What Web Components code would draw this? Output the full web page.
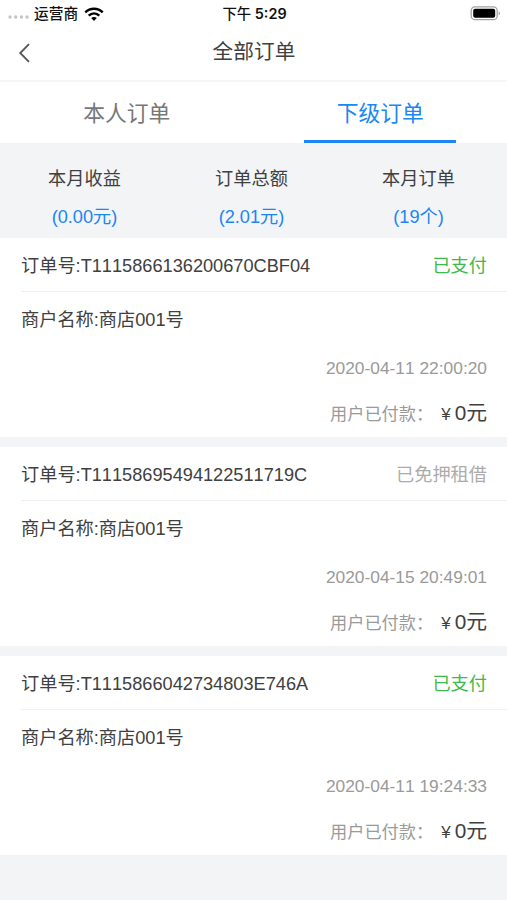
<!DOCTYPE html>
<html lang="zh-CN">
<head>
  <meta charset="UTF-8">
  <meta name="viewport" content="width=device-width, initial-scale=1.0">
  <title>全部订单</title>
  <style>
    body {
      margin: 0;
      min-height: 100vh;
      background: #f2f4f6;
      color: #404040;
      font-family: "Liberation Sans", "Noto Sans CJK SC", sans-serif;
      font-kerning: none;
    }
  </style>
</head>
<body>
  <order-page></order-page>

  <script>
    class StatusBar extends HTMLElement {
      constructor() {
        super();
        this.attachShadow({ mode: 'open' });

        this.shadowRoot.innerHTML = `
          <style>
            :host {
              display: grid;
              grid-template-columns: 1fr auto 1fr;
              align-items: center;
              height: 26px;
              padding: 0 6px 0 8px;
              background: #fff;
              color: #111;
              font-family: Inter, "Noto Sans CJK SC", sans-serif;
              font-size: 14.7px;
              font-weight: 500;
              line-height: 26px;
              white-space: nowrap;
            }

            .carrier {
              display: flex;
              align-items: center;
            }

            .carrier span,
            .time {
              padding-top: 1px;
            }

            .dots {
              margin: 7px 5px 0 0;
            }

            .wifi {
              margin-left: 6px;
            }

            .time {
              font-size: 14.4px;
              font-weight: 600;
            }

            .battery {
              justify-self: end;
            }

            svg {
              display: block;
            }
          </style>

          <div class="carrier">
            <svg class="dots" width="21" height="4" viewBox="0 0 21 4" fill="#c4c4c4">
              <circle cx="2" cy="2" r="1.7"/>
              <circle cx="7.7" cy="2" r="1.7"/>
              <circle cx="13.4" cy="2" r="1.7"/>
              <circle cx="19" cy="2" r="1.7"/>
            </svg>
            <span><slot name="carrier"></slot></span>
            <svg class="wifi" width="20" height="14" viewBox="0 0 20 14" fill="none" stroke="#000" stroke-width="2.5">
              <path d="M1.3 5.3C6.2 .4 13.8 .4 18.7 5.3"/>
              <path d="M4.7 8.7C7.8 5.7 12.2 5.7 15.3 8.7"/>
              <path d="M7.2 11.1C8.8 9.6 11.2 9.6 12.8 11.1L10 13.9Z" fill="#000" stroke="none"/>
            </svg>
          </div>
          <div class="time"><slot name="time"></slot></div>
          <svg class="battery" width="31" height="15" viewBox="0 0 31 15">
            <rect x="1.2" y=".9" width="26" height="12.8" rx="3.8" fill="none" stroke="#a3a3a3" stroke-width="1.3"/>
            <rect x="3.2" y="2.8" width="22" height="9" rx="2" fill="#000"/>
            <path d="M28.7 5.2c1.8.8 1.8 3.4 0 4.2z" fill="#a3a3a3"/>
          </svg>
        `;
      }
    }

    class NavBar extends HTMLElement {
      constructor() {
        super();
        this.attachShadow({ mode: 'open' });

        this.shadowRoot.innerHTML = `
          <style>
            :host {
              display: grid;
              grid-template-columns: 1fr auto 1fr;
              align-items: center;
              box-sizing: border-box;
              height: 56px;
              padding: 0 17px 3px 18px;
              background: #fff;
              border-bottom: 2px solid #f5f5f5;
            }

            h1 {
              margin: 0;
              font-size: 20.7px;
              font-weight: 400;
              line-height: 30px;
            }

            svg {
              display: block;
              margin-top: 3px;
            }
          </style>

          <svg width="13" height="20" viewBox="0 0 13 20" fill="none" stroke="#555" stroke-width="1.8">
            <path d="M11 1.2L2.2 10L11 18.8"/>
          </svg>
          <h1><slot></slot></h1>
        `;
      }
    }

    class OrderTab extends HTMLElement {
      constructor() {
        super();
        this.attachShadow({ mode: 'open' });

        this.shadowRoot.innerHTML = `
          <style>
            :host {
              display: flex;
              flex: 1;
              justify-content: center;
              height: 61px;
              background: #fff;
              color: #777;
              font-size: 21.8px;
              line-height: 64px;
            }

            span {
              box-sizing: border-box;
              width: 152px;
              height: 61px;
              text-align: center;
              white-space: nowrap;
            }

            :host([active]) {
              color: #1c86f2;
            }

            :host([active]) span {
              border-bottom: 3px solid #1c86f2;
            }
          </style>

          <span><slot></slot></span>
        `;
      }
    }

    class StatItem extends HTMLElement {
      constructor() {
        super();
        this.attachShadow({ mode: 'open' });

        this.shadowRoot.innerHTML = `
          <style>
            :host {
              display: flex;
              flex: 1;
              flex-direction: column;
              align-items: center;
              gap: 12px;
              padding-top: 23px;
              font-size: 18.2px;
              line-height: 26px;
            }

            .value {
              color: #1c86f2;
            }
          </style>

          <div>${this.getAttribute('label')}</div>
          <div class="value"><slot></slot></div>
        `;
      }
    }

    class OrderCard extends HTMLElement {
      constructor() {
        super();
        this.attachShadow({ mode: 'open' });

        this.shadowRoot.innerHTML = `
          <style>
            :host {
              display: block;
              box-sizing: border-box;
              height: 199px;
              padding-left: 21px;
              background: #fff;
              font-size: 18.2px;
              white-space: nowrap;
            }

            .head {
              display: flex;
              justify-content: space-between;
              box-sizing: border-box;
              height: 54px;
              padding-right: 20px;
              border-bottom: 1px solid #f0f0f0;
              line-height: 56px;
            }

            .status {
              color: #3cba4c;
            }

            :host([state="free"]) .status {
              color: #acacac;
            }

            .shop {
              height: 54px;
              line-height: 56px;
            }

            .time {
              padding-right: 20px;
              color: #9a9a9a;
              font-size: 17.35px;
              line-height: 44px;
              text-align: right;
            }

            .pay {
              display: flex;
              justify-content: flex-end;
              align-items: baseline;
              padding-right: 20px;
              line-height: 46px;
            }

            .label {
              color: #9a9a9a;
              font-size: 17.2px;
            }

            .yen {
              margin: 0 4px 0 8px;
              font-size: 17px;
            }

            .amount {
              font-size: 20.8px;
            }
          </style>

          <div class="head">
            <span>订单号:<slot name="no"></slot></span>
            <span class="status"><slot name="status"></slot></span>
          </div>
          <div class="shop">商户名称:<slot name="shop"></slot></div>
          <div class="time"><slot name="time"></slot></div>
          <div class="pay">
            <span class="label">用户已付款：</span>
            <span class="yen">¥</span>
            <span class="amount"><slot name="amount"></slot></span>
          </div>
        `;
      }
    }

    class OrderPage extends HTMLElement {
      constructor() {
        super();
        this.attachShadow({ mode: 'open' });

        this.shadowRoot.innerHTML = `
          <style>
            :host {
              display: block;
            }

            .tabs {
              display: flex;
            }

            .stats {
              display: flex;
              height: 95px;
              padding: 0 5px 0 1px;
            }

            .list {
              display: flex;
              flex-direction: column;
              gap: 10px;
            }

            .cjk {
              font-weight: 500;
            }
          </style>

          <status-bar>
            <span slot="carrier">运营商</span>
            <span slot="time"><span class="cjk">下午</span> 5:29</span>
          </status-bar>
          <nav-bar>全部订单</nav-bar>
          <div class="tabs">
            <order-tab>本人订单</order-tab>
            <order-tab active>下级订单</order-tab>
          </div>
          <div class="stats">
            <stat-item label="本月收益">(0.00元)</stat-item>
            <stat-item label="订单总额">(2.01元)</stat-item>
            <stat-item label="本月订单">(19个)</stat-item>
          </div>
          <div class="list">
            <order-card>
              <span slot="no">T1115866136200670CBF04</span>
              <span slot="status">已支付</span>
              <span slot="shop">商店001号</span>
              <span slot="time">2020-04-11 22:00:20</span>
              <span slot="amount">0元</span>
            </order-card>
            <order-card state="free">
              <span slot="no">T11158695494122511719C</span>
              <span slot="status">已免押租借</span>
              <span slot="shop">商店001号</span>
              <span slot="time">2020-04-15 20:49:01</span>
              <span slot="amount">0元</span>
            </order-card>
            <order-card>
              <span slot="no">T1115866042734803E746A</span>
              <span slot="status">已支付</span>
              <span slot="shop">商店001号</span>
              <span slot="time">2020-04-11 19:24:33</span>
              <span slot="amount">0元</span>
            </order-card>
          </div>
        `;
      }
    }

    customElements.define('status-bar', StatusBar);
    customElements.define('nav-bar', NavBar);
    customElements.define('order-tab', OrderTab);
    customElements.define('stat-item', StatItem);
    customElements.define('order-card', OrderCard);
    customElements.define('order-page', OrderPage);
  </script>
</body>
</html>
